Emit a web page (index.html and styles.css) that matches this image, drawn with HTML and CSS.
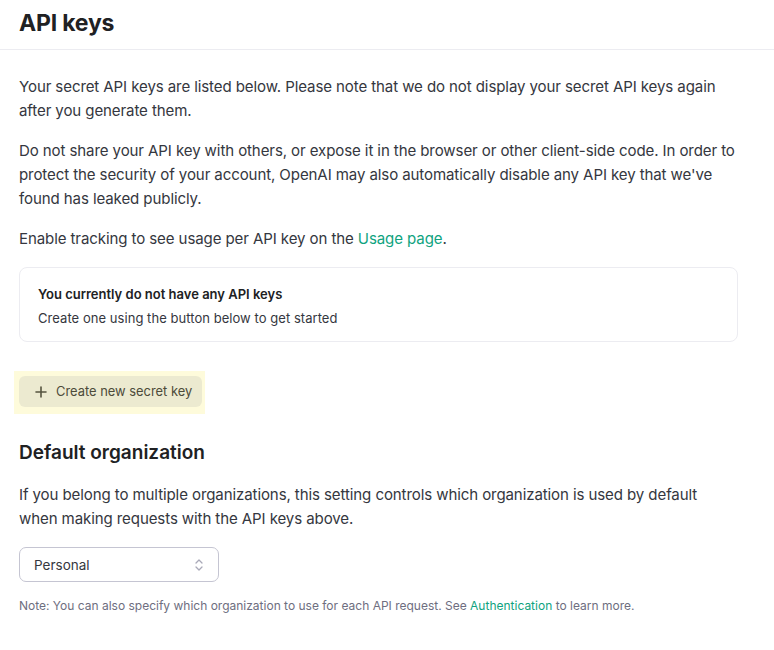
FILE: index.html
```html
<!DOCTYPE html>
<html>
<head>
<meta charset="utf-8">
<link rel="stylesheet" href="styles.css">
</head>
<body>
<header class="page-header">
  <h1 class="page-title">API keys</h1>
</header>
<main class="content">
  <p class="text">Your secret API keys are listed below. Please note that we do not display your secret API keys again after you generate them.</p>
  <p class="text">Do not share your API key with others, or expose it in the browser or other client-side code. In order to protect the security of your account, OpenAI may also automatically disable any API key that we've found has leaked publicly.</p>
  <p class="text">Enable tracking to see usage per API key on the <a class="link" href="#">Usage page</a>.</p>
  <div class="empty-card">
    <div class="empty-title">You currently do not have any API keys</div>
    <div class="empty-sub">Create one using the button below to get started</div>
  </div>
  <div class="highlight">
    <button class="btn"><svg class="plus" width="12" height="12" viewBox="0 0 12 12" fill="none" stroke="#56543f" stroke-width="1.6" stroke-linecap="round"><path d="M6 1 V11 M1 6 H11"/></svg>Create new secret key</button>
  </div>
  <h2 class="section-title">Default organization</h2>
  <p class="text">If you belong to multiple organizations, this setting controls which organization is used by default when making requests with the API keys above.</p>
  <div class="select">
    <span class="select-value">Personal</span>
    <svg class="chev" width="10" height="14" viewBox="0 0 10 14" fill="none" stroke="#a9a9b8" stroke-width="1.3" stroke-linecap="round" stroke-linejoin="round"><path d="M2 5 L5 2 L8 5"/><path d="M2 9 L5 12 L8 9"/></svg>
  </div>
  <p class="note">Note: You can also specify which organization to use for each API request. See <a class="link" href="#">Authentication</a> to learn more.</p>
</main>
</body>
</html>
```
FILE: styles.css
```css
* { box-sizing: border-box; }
body {
  margin: 0;
  background: #fff;
  font-family: Inter, "Noto Sans", sans-serif;
  color: #353740;
}
.page-header {
  height: 50px;
  border-bottom: 1px solid #ececf1;
  padding: 7px 19px 0;
}
.page-title {
  margin: 0;
  font-size: 23px;
  line-height: 32px;
  font-weight: 700;
  color: #202123;
  letter-spacing: -0.2px;
}
.content {
  padding: 25px 0 0 19px;
  width: 738px;
}
.text {
  margin: 0 0 16px;
  font-size: 15.05px;
  line-height: 24px;
  letter-spacing: -0.1px;
}
.link { color: #10a37f; text-decoration: none; }
.empty-card {
  width: 719px;
  border: 1px solid #ececf1;
  border-radius: 8px;
  padding: 16px 18px 13px;
}
.empty-title {
  font-size: 13px;
  font-weight: 600;
  line-height: 20px;
  color: #202123;
}
.empty-sub {
  font-size: 13px;
  line-height: 20px;
  margin-top: 4px;
  letter-spacing: 0.05px;
}
.highlight {
  display: inline-block;
  margin: 29px 0 0 -5px;
  padding: 5px 3px 7px 5px;
  background: #fefbdb;
}
.btn {
  display: flex;
  align-items: center;
  height: 31px;
  width: 183px;
  padding: 0 0 0 16px;
  border: none;
  border-radius: 6px;
  background: #ecead0;
  color: #4d4b3a;
  font-family: Inter, "Noto Sans", sans-serif;
  font-size: 12.9px;
}
.plus {
  margin-right: 9px;
  flex: none;
}
.section-title {
  margin: 27px 0 18px;
  font-size: 19px;
  line-height: 24px;
  font-weight: 600;
  color: #202123;
}
.select {
  display: flex;
  align-items: center;
  justify-content: space-between;
  width: 200px;
  height: 35px;
  margin-top: 10px;
  padding: 0 14px 0 14px;
  border: 1px solid #c5c5d2;
  border-radius: 7px;
}
.select-value {
  font-size: 13.5px;
  color: #353740;
}
.note {
  margin: 15px 0 0;
  font-size: 12px;
  line-height: 18px;
  color: #6e6e80;
}
```
